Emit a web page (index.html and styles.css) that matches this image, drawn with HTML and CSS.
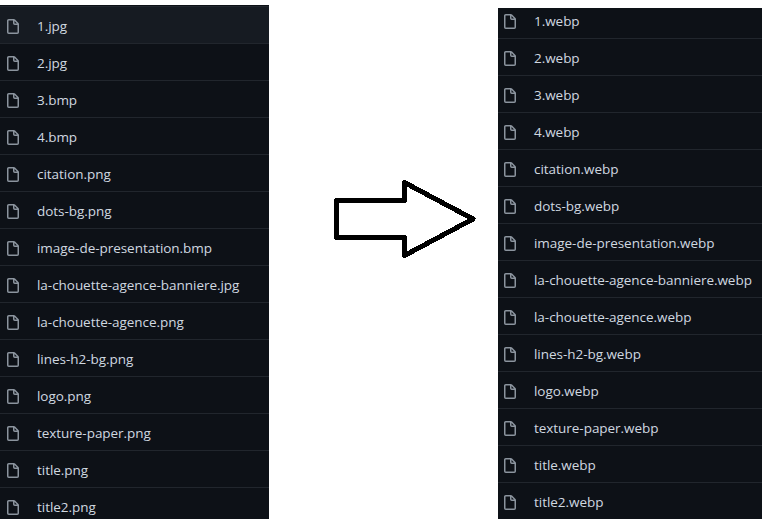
FILE: index.html
```
<!DOCTYPE html>
<html lang="fr">
<head>
<meta charset="utf-8">
<title>Images</title>
<link rel="stylesheet" href="styles.css">
</head>
<body>
<svg class="defs" aria-hidden="true"><symbol id="file" viewBox="0 0 16 16"><path d="M3.75 1.5a.25.25 0 00-.25.25v11.5c0 .138.112.25.25.25h8.5a.25.25 0 00.25-.25V6H9.75A1.75 1.75 0 018 4.25V1.5H3.75zm5.75.56v2.19c0 .138.112.25.25.25h2.19L9.5 2.06zM2 1.75C2 .784 2.784 0 3.75 0h5.086c.464 0 .909.184 1.237.513l3.414 3.414c.329.328.513.773.513 1.237v8.086A1.75 1.75 0 0112.25 15h-8.5A1.75 1.75 0 012 13.25V1.75z"/></symbol></svg>
<main class="board">
<ul class="files before">
<li class="hover"><svg><use href="#file"/></svg><span>1.jpg</span></li>
<li><svg><use href="#file"/></svg><span>2.jpg</span></li>
<li><svg><use href="#file"/></svg><span>3.bmp</span></li>
<li><svg><use href="#file"/></svg><span>4.bmp</span></li>
<li><svg><use href="#file"/></svg><span>citation.png</span></li>
<li><svg><use href="#file"/></svg><span>dots-bg.png</span></li>
<li><svg><use href="#file"/></svg><span>image-de-presentation.bmp</span></li>
<li><svg><use href="#file"/></svg><span>la-chouette-agence-banniere.jpg</span></li>
<li><svg><use href="#file"/></svg><span>la-chouette-agence.png</span></li>
<li><svg><use href="#file"/></svg><span>lines-h2-bg.png</span></li>
<li><svg><use href="#file"/></svg><span>logo.png</span></li>
<li><svg><use href="#file"/></svg><span>texture-paper.png</span></li>
<li><svg><use href="#file"/></svg><span>title.png</span></li>
<li><svg><use href="#file"/></svg><span>title2.png</span></li>
</ul>
<div class="middle"><svg class="arrow" viewBox="0 0 146 82"><path d="M4.5 22.5H72.5V4.5L141 41L72.5 77.500V59.500H4.500Z"/></svg></div>
<ul class="files after">
<li><svg><use href="#file"/></svg><span>1.webp</span></li>
<li><svg><use href="#file"/></svg><span>2.webp</span></li>
<li><svg><use href="#file"/></svg><span>3.webp</span></li>
<li><svg><use href="#file"/></svg><span>4.webp</span></li>
<li><svg><use href="#file"/></svg><span>citation.webp</span></li>
<li><svg><use href="#file"/></svg><span>dots-bg.webp</span></li>
<li><svg><use href="#file"/></svg><span>image-de-presentation.webp</span></li>
<li><svg><use href="#file"/></svg><span>la-chouette-agence-banniere.webp</span></li>
<li><svg><use href="#file"/></svg><span>la-chouette-agence.webp</span></li>
<li><svg><use href="#file"/></svg><span>lines-h2-bg.webp</span></li>
<li><svg><use href="#file"/></svg><span>logo.webp</span></li>
<li><svg><use href="#file"/></svg><span>texture-paper.webp</span></li>
<li><svg><use href="#file"/></svg><span>title.webp</span></li>
<li><svg><use href="#file"/></svg><span>title2.webp</span></li>
</ul>
</main>
</body>
</html>
```
FILE: styles.css
```
* { box-sizing: border-box; }
body { margin: 0; background: #fff; overflow: hidden; }
.defs { display: none; }
.board {
  display: grid;
  grid-template-columns: 269px 229px 264px;
  height: 519px;
  overflow: hidden;
}
.files {
  display: flex;
  flex-direction: column;
  margin: 0;
  padding: 0;
  list-style: none;
  overflow: hidden;
  background: #0d1117;
  color: #d0d8e0;
  font: 13.5px/20px "Open Sans", "Noto Sans", sans-serif;
  letter-spacing: -0.04px;
}
.before { margin-top: 5px; padding-top: 1px; }
.after { margin-top: 8px; }
.files li {
  flex: none;
  display: flex;
  align-items: center;
  gap: 16px;
  height: 37px;
  padding: 2px 0 0 5px;
  border-top: 1px solid #21262d;
}
.after li { padding-left: 4px; }
.after li:first-child { height: 30px; padding: 0 0 4px 4px; border-top: 0; }
.files .hover { background: #161b22; }
.files svg { flex: none; width: 16px; height: 16px; margin-top: 2px; fill: #8b949e; }
.files span { white-space: nowrap; }
.middle { padding: 178px 0 0 63px; }
.arrow { display: block; width: 146px; height: 82px; }
.arrow path {
  fill: #fff;
  stroke: #000;
  stroke-width: 5;
  stroke-linejoin: round;
  shape-rendering: crispEdges;
}
```
